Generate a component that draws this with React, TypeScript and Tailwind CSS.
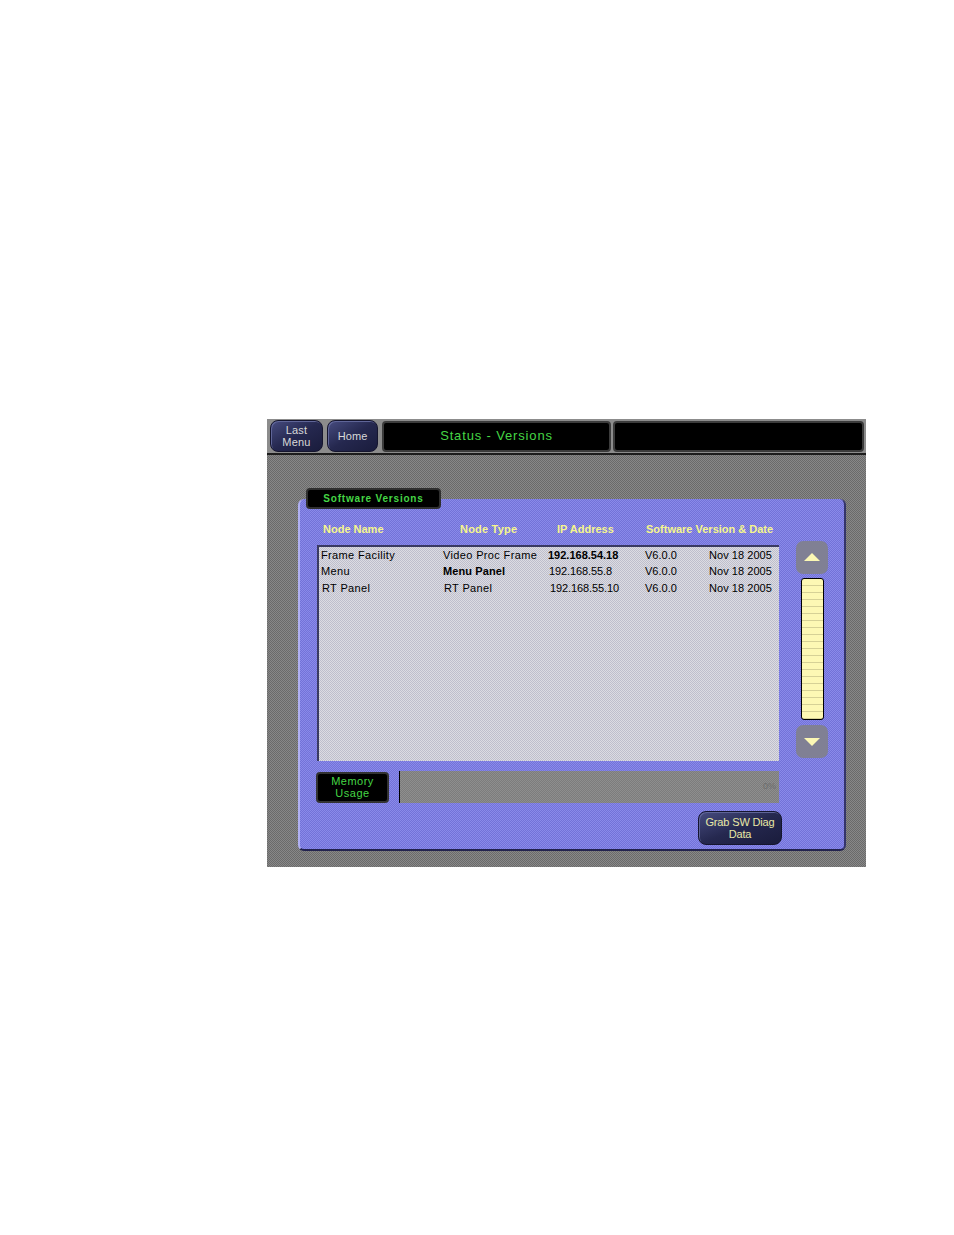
import React from "react";

const noise = "bg-[repeating-conic-gradient(#888888_0_25%,#6a6a6a_0_50%)] bg-[length:2px_2px]";

function NavButton({ lines, className }: { lines: string[]; className: string }) {
  return (
    <div className={`flex flex-col items-center justify-center rounded-[8px] border border-[#15152e] bg-gradient-to-br from-[#474c80] via-[#25284f] to-[#1a1c3c] text-[11px] leading-[12px] shadow-[inset_1px_1px_0_#5f6598] ${className}`}>
      {lines.map((l) => (
        <span key={l}>{l}</span>
      ))}
    </div>
  );
}

function ScrollButton({ up }: { up?: boolean }) {
  return (
    <div className="flex h-[33px] w-[32px] items-center justify-center rounded-[7px] bg-[#808094]">
      <svg width="16" height="8" viewBox="0 0 16 8" className={up ? "-mt-[2px]" : ""}>
        <polygon points={up ? "8,0 16,8 0,8" : "0,0 16,0 8,8"} fill="#fbf7b4" />
      </svg>
    </div>
  );
}

const rows = [
  { name: "Frame Facility", type: "Video Proc Frame", ip: "192.168.54.18", nameCls: "ml-[2px] w-[122px]", typeCls: "w-[105px]", ipCls: "w-[97px] font-bold tracking-[0]" },
  { name: "Menu", type: "Menu Panel", ip: "192.168.55.8", nameCls: "ml-[2px] w-[122px]", typeCls: "w-[106px] font-bold tracking-[0.1px]", ipCls: "w-[96px] tracking-[-0.1px]" },
  { name: "RT Panel", type: "RT Panel", ip: "192.168.55.10", nameCls: "ml-[3px] w-[122px]", typeCls: "w-[106px]", ipCls: "w-[95px] tracking-[-0.1px]" },
];

export default function App() {
  return (
    <div className="h-[1235px] w-[954px] bg-white pl-[267px] pt-[419px] font-['Liberation_Sans',Arial,sans-serif]">
      <div className={`h-[448px] w-[599px] ${noise}`}>
        {/* top bar */}
        <div className="flex h-[36px] items-center gap-[3px] border-b-2 border-[#1c1c1c] bg-[#8c8c8c] pl-[3px]">
          <NavButton lines={["Last", "Menu"]} className="h-[32px] w-[53px] tracking-[0.2px] text-[#d8d8d8]" />
          <NavButton lines={["Home"]} className="ml-[1px] h-[32px] w-[51px] tracking-[0.1px] text-[#d8d8d8]" />
          <div className="ml-[1px] flex h-[31px] w-[229px] items-center justify-center rounded-[4px] border-2 border-[#3c3c3c] bg-black text-[13px] tracking-[0.85px] text-[#45d645]">
            Status - Versions
          </div>
          <div className="-ml-[1px] h-[31px] w-[251px] rounded-[4px] border-2 border-[#3c3c3c] bg-black" />
        </div>

        {/* tab sits over the top edge of the panel */}
        <div className="relative z-10 ml-[39px] mt-[33px] flex h-[21px] w-[135px] items-center justify-center rounded-[4px] border-2 border-[#2f2f2f] bg-black text-[10px] font-bold tracking-[0.8px] text-[#45d645]">
          Software Versions
        </div>

        <div className="-mt-[10px] ml-[31px] h-[352px] w-[548px] rounded-[6px] border-b-2 border-l-2 border-r-2 border-b-[#22224e] border-l-[#b0b0f2] border-r-[#34346a] bg-[repeating-conic-gradient(#8a8aea_0_25%,#7272d8_0_50%)] bg-[length:2px_2px] pl-[17px] pt-[22px]">
          {/* column headings */}
          <div className="flex h-[16px] items-center text-[11px] font-bold text-[#f6f68c]">
            <span className="ml-[6px] w-[137px]">Node Name</span>
            <span className="w-[97px] tracking-[0.2px]">Node Type</span>
            <span className="w-[89px]">IP Address</span>
            <span>Software Version &amp; Date</span>
          </div>

          <div className="mt-[4px] flex">
            <div className="mt-[4px] h-[216px] w-[462px] border-l-2 border-t-2 border-[#3a3a62] bg-[repeating-conic-gradient(#dcdce2_0_25%,#bebecc_0_50%)] bg-[length:2px_2px] text-[11px] tracking-[0.36px] text-black">
              {rows.map((r) => (
                <div key={r.name} className="flex h-[16.3px] items-center">
                  <span className={r.nameCls}>{r.name}</span>
                  <span className={r.typeCls}>{r.type}</span>
                  <span className={r.ipCls}>{r.ip}</span>
                  <span className="w-[64px] tracking-[0]">V6.0.0</span>
                  <span className="tracking-[0.05px]">Nov 18 2005</span>
                </div>
              ))}
            </div>

            <div className="ml-[17px] flex flex-col">
              <ScrollButton up />
              <div className="ml-[5px] mt-[4px] h-[142px] w-[23px] rounded-[3px] border border-black bg-[repeating-linear-gradient(180deg,#fdf8b4_0_6px,#d6d196_6px_7px)]" />
              <div className="mt-[5px]">
                <ScrollButton />
              </div>
            </div>
          </div>

          {/* memory usage */}
          <div className="mt-[10px] flex">
            <div className="-ml-[1px] mt-[1px] flex h-[31px] w-[73px] flex-col items-center justify-center rounded-[4px] border-2 border-[#333] bg-black pb-[2px] text-[11px] leading-[12px] tracking-[0.5px] text-[#45d645]">
              <span>Memory</span>
              <span>Usage</span>
            </div>
            <div className="ml-[10px] flex h-[32px] w-[380px] items-center justify-end border-l border-black bg-[repeating-conic-gradient(#8e8e8e_0_25%,#7c7c7c_0_50%)] bg-[length:2px_2px] pr-[3px] text-[9px] text-[#6c6c6c]">
              0%
            </div>
          </div>

          <div className="ml-[381px] mt-[8px] w-[84px]">
            <NavButton lines={["Grab SW Diag", "Data"]} className="h-[34px] w-[84px] tracking-[-0.15px] text-[#e8e8a6]" />
          </div>
        </div>
      </div>
    </div>
  );
}
